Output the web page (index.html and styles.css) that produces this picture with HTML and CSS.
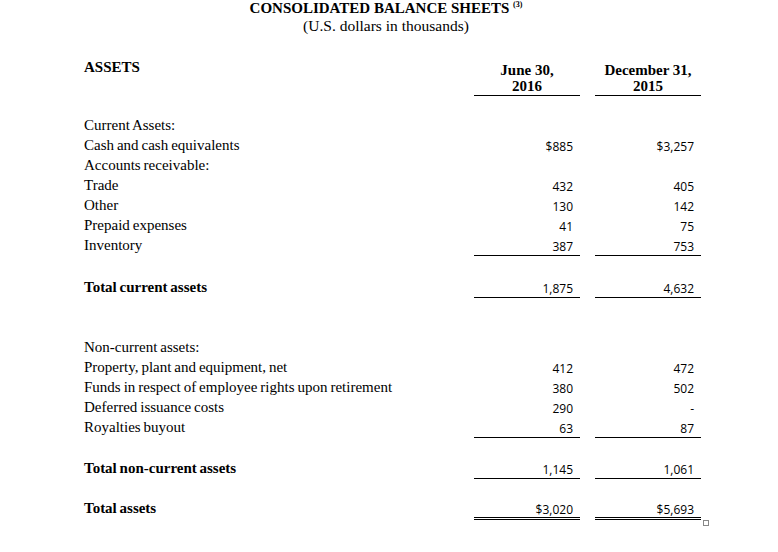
FILE: index.html
```html
<!DOCTYPE html>
<html>
<head>
<meta charset="utf-8">
<link rel="stylesheet" href="styles.css">
</head>
<body>
<div class="page">
  <div class="title">CONSOLIDATED BALANCE SHEETS <sup class="note">(3)</sup></div>
  <div class="subtitle">(U.S. dollars in thousands)</div>

  <div class="head-row">
    <div class="label head-label">ASSETS</div>
    <div class="cell head-cell">June 30,<br>2016</div>
    <div class="cell head-cell">December 31,<br>2015</div>
  </div>

  <div class="section s1">
    <div class="row"><div class="label">Current Assets:</div></div>
    <div class="row"><div class="label">Cash and cash equivalents</div><div class="cell num">$885</div><div class="cell num">$3,257</div></div>
    <div class="row"><div class="label">Accounts receivable:</div></div>
    <div class="row"><div class="label">Trade</div><div class="cell num">432</div><div class="cell num">405</div></div>
    <div class="row"><div class="label">Other</div><div class="cell num">130</div><div class="cell num">142</div></div>
    <div class="row"><div class="label">Prepaid expenses</div><div class="cell num">41</div><div class="cell num">75</div></div>
    <div class="row"><div class="label">Inventory</div><div class="cell num rule">387</div><div class="cell num rule">753</div></div>
  </div>

  <div class="section s2">
    <div class="row"><div class="label bold">Total current assets</div><div class="cell num rule">1,875</div><div class="cell num rule">4,632</div></div>
  </div>

  <div class="section s3">
    <div class="row"><div class="label">Non-current assets:</div></div>
    <div class="row"><div class="label">Property, plant and equipment, net</div><div class="cell num">412</div><div class="cell num">472</div></div>
    <div class="row"><div class="label">Funds in respect of employee rights upon retirement</div><div class="cell num">380</div><div class="cell num">502</div></div>
    <div class="row"><div class="label">Deferred issuance costs</div><div class="cell num">290</div><div class="cell num">-</div></div>
    <div class="row"><div class="label">Royalties buyout</div><div class="cell num rule">63</div><div class="cell num rule">87</div></div>
  </div>

  <div class="section s4">
    <div class="row"><div class="label bold">Total non-current assets</div><div class="cell num rule">1,145</div><div class="cell num rule">1,061</div></div>
  </div>

  <div class="section s5">
    <div class="row"><div class="label bold">Total assets</div><div class="cell num double">$3,020</div><div class="cell num double">$5,693<span class="anchor"></span></div></div>
  </div>
</div>
</body>
</html>
```

FILE: styles.css
```css
* { box-sizing: border-box; }
html, body { margin: 0; padding: 0; background: #fff; }
body {
  font-family: "Liberation Serif", "Times New Roman", serif;
  color: #000;
}
.page {
  width: 778px;
  min-height: 552px;
}
.title {
  text-align: center;
  font-weight: bold;
  font-size: 15px;
  line-height: 16px;
  height: 16px;
  padding-right: 6px;
}
.note {
  font-size: 8px;
  vertical-align: top;
  position: relative;
  top: -3px;
}
.subtitle {
  text-align: center;
  font-size: 15.5px;
  line-height: 20px;
  height: 20px;
  padding-right: 6px;
}
.head-row {
  display: flex;
  align-items: flex-start;
  padding-left: 84px;
  margin-top: 24px;
}
.label {
  width: 390px;
  font-size: 15px;
  line-height: 20px;
  height: 20px;
  white-space: nowrap;
  word-spacing: -0.8px;
}
.head-label {
  font-weight: bold;
  line-height: 14px;
  height: 14px;
}
.bold { font-weight: bold; word-spacing: -1px; }
.cell {
  width: 106px;
  margin-right: 15px;
}
.head-cell {
  font-weight: bold;
  font-size: 15px;
  line-height: 16px;
  text-align: center;
  border-bottom: 1px solid #000;
  padding-top: 2px;
  height: 36px;
}
.s1 { margin-top: 19px; }
.s2 { margin-top: 22px; }
.s3 { margin-top: 40px; }
.s4 { margin-top: 21px; }
.s5 { margin-top: 20px; }
.row {
  display: flex;
  padding-left: 84px;
  height: 20px;
}
.num {
  font-family: "Open Sans", "Liberation Sans", sans-serif;
  font-size: 12px;
  line-height: 20px;
  padding-top: 2px;
  height: 20px;
  text-align: right;
  padding-right: 7px;
  position: relative;
}
.rule { border-bottom: 1px solid #000; height: 21px; }
.double {
  border-bottom: 3px double #000;
  height: 22px;
}
.anchor {
  position: absolute;
  right: -8px;
  bottom: -9px;
  width: 6px;
  height: 6px;
  border: 1px solid #888;
  background: #fff;
}
```
